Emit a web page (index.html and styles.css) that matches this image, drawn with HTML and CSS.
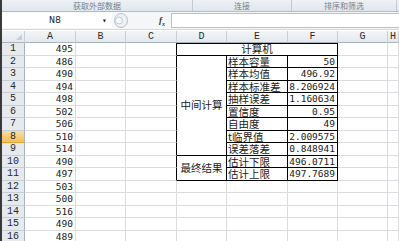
FILE: index.html
```html
<!DOCTYPE html>
<html lang="zh">
<head>
<meta charset="utf-8">
<link rel="stylesheet" href="styles.css">
</head>
<body>
<div class="app">
  <div class="ribbon">
    <div class="grp g1">获取外部数据</div>
    <div class="grp g2">连接</div>
    <div class="grp g3">排序和筛选</div>
  </div>
  <div class="fbar">
    <div class="namebox"><span class="nm">N8</span><span class="dd">&#9662;</span></div>
    <svg class="grip" width="14" height="15" viewBox="0 0 14 15"><rect x="0.5" y="0.5" width="13" height="14" rx="7" fill="#eef1f5" stroke="#b8c0ca"/><circle cx="5" cy="7.5" r="3.5" fill="#fafbfc" stroke="#c3cad3"/></svg>
    <span class="fx">f<sub>x</sub></span>
    <div class="finput"></div>
  </div>
  <div class="sheet">
    <div class="ch corner"><svg width="6" height="6" viewBox="0 0 6 6"><path d="M6 0V6H0Z" fill="#c9ced6"/></svg></div>
    <div class="ch">A</div><div class="ch">B</div><div class="ch">C</div><div class="ch">D</div><div class="ch">E</div><div class="ch">F</div><div class="ch">G</div><div class="ch">H</div>

    <div class="rh">1</div><div class="c n">495</div><div class="c"></div><div class="c tl"></div><div class="c t tt cap">计算机</div><div class="c"></div><div class="c"></div>

    <div class="rh">2</div><div class="c n">486</div><div class="c"></div><div class="c tl"></div><div class="c t grpd mid">中间计算</div><div class="c t lb">样本容量</div><div class="c t n">50</div><div class="c"></div><div class="c"></div>
    <div class="rh">3</div><div class="c n">490</div><div class="c"></div><div class="c tl"></div><div class="c t lb">样本均值</div><div class="c t n">496.92</div><div class="c"></div><div class="c"></div>
    <div class="rh">4</div><div class="c n">494</div><div class="c"></div><div class="c tl"></div><div class="c t lb">样本标准差</div><div class="c t n">8.206924</div><div class="c"></div><div class="c"></div>
    <div class="rh">5</div><div class="c n">498</div><div class="c"></div><div class="c tl"></div><div class="c t lb">抽样误差</div><div class="c t n">1.160634</div><div class="c"></div><div class="c"></div>
    <div class="rh">6</div><div class="c n">502</div><div class="c"></div><div class="c tl"></div><div class="c t lb">置信度</div><div class="c t n">0.95</div><div class="c"></div><div class="c"></div>
    <div class="rh">7</div><div class="c n">506</div><div class="c"></div><div class="c tl"></div><div class="c t lb">自由度</div><div class="c t n">49</div><div class="c"></div><div class="c"></div>
    <div class="rh sel">8</div><div class="c n">510</div><div class="c"></div><div class="c tl"></div><div class="c t lb">t临界值</div><div class="c t n">2.009575</div><div class="c"></div><div class="c"></div>
    <div class="rh">9</div><div class="c n">514</div><div class="c"></div><div class="c tl"></div><div class="c t lb">误差落差</div><div class="c t n">0.848941</div><div class="c"></div><div class="c"></div>
    <div class="rh">10</div><div class="c n">490</div><div class="c"></div><div class="c tl"></div><div class="c t grpe mid">最终结果</div><div class="c t lb">估计下限</div><div class="c t n">496.0711</div><div class="c"></div><div class="c"></div>
    <div class="rh">11</div><div class="c n">497</div><div class="c"></div><div class="c tl"></div><div class="c t lb">估计上限</div><div class="c t n">497.7689</div><div class="c"></div><div class="c"></div>

    <div class="rh">12</div><div class="c n">503</div><div class="c"></div><div class="c"></div><div class="c"></div><div class="c"></div><div class="c"></div><div class="c"></div><div class="c"></div>
    <div class="rh">13</div><div class="c n">500</div><div class="c"></div><div class="c"></div><div class="c"></div><div class="c"></div><div class="c"></div><div class="c"></div><div class="c"></div>
    <div class="rh">14</div><div class="c n">516</div><div class="c"></div><div class="c"></div><div class="c"></div><div class="c"></div><div class="c"></div><div class="c"></div><div class="c"></div>
    <div class="rh">15</div><div class="c n">490</div><div class="c"></div><div class="c"></div><div class="c"></div><div class="c"></div><div class="c"></div><div class="c"></div><div class="c"></div>
    <div class="rh">16</div><div class="c n">489</div><div class="c"></div><div class="c"></div><div class="c"></div><div class="c"></div><div class="c"></div><div class="c"></div><div class="c"></div>
  </div>
</div>
</body>
</html>
```
FILE: styles.css
```css
* { box-sizing: border-box; margin: 0; padding: 0; }
html, body { width: 399px; height: 241px; overflow: hidden; background: #fff; }
body { font-family: "DejaVu Sans Mono", "Noto Sans CJK SC", monospace; color: #1a1a1a; }

.app { height: 241px; border-left: 2px solid #3a3a3a; overflow: hidden; }

.ribbon {
  height: 12px;
  display: flex;
  background: linear-gradient(#eef1f5, #e0e6ed);
  border-bottom: 1px solid #b4bcc7;
}
.grp {
  display: flex;
  align-items: center;
  justify-content: center;
  border-right: 1px solid #c3cad3;
  font: 8px/1 "Noto Sans CJK SC", sans-serif;
  color: #7a7f86;
}
.g1 { width: 191px; }
.g2 { width: 99px; }
.g3 { width: 105px; }

.fbar {
  height: 18px;
  display: flex;
  align-items: center;
  background: #f4f6f8;
  border-bottom: 1px solid #d5dae1;
}
.namebox {
  width: 110px;
  height: 15px;
  display: flex;
  align-items: center;
  background: #fff;
}
.nm { flex: 1; text-align: center; font: 10px "Liberation Mono", monospace; padding-left: 6px; }
.dd { width: 10px; font-size: 8px; color: #222; }
.grip { margin-left: 2px; }
.fx {
  margin-left: 31px;
  width: 12px;
  font: italic bold 9px "Liberation Serif", serif;
  color: #333;
}
.fx sub { font-size: 6px; }
.finput {
  flex: 1;
  height: 15px;
  background: #fff;
  border: 1px solid #b9c1cb;
  border-right: none;
}

.sheet {
  margin-top: 1px;
  display: grid;
  grid-template-columns: 23px 51px 50px 51px 50px 61px 50px 50px 1fr;
  grid-template-rows: 12px repeat(16, 12.5px);
  font-size: 9.5px;
}
.ch {
  background: linear-gradient(#f3f5f8, #e4e8ed);
  border-right: 1px solid #c8ced6;
  border-bottom: 1px solid #a9b1bb;
  text-align: center;
  font: 10px/11px "Liberation Mono", monospace;
  color: #2a2a2a;
}
.corner { display: flex; align-items: flex-end; justify-content: flex-end; padding: 0 2px 2px 0; }
.rh {
  background: #e6eaef;
  border-right: 1px solid #a9b1bb;
  border-bottom: 1px solid #c8ced6;
  text-align: center;
  font: 10px/12px "Liberation Mono", monospace;
  color: #2a2a2a;
}
.rh.sel {
  background: linear-gradient(#f9dc9e, #f1c15c);
  border-bottom-color: #e5a435;
}
.c {
  border-right: 1px solid #dadcdf;
  border-bottom: 1px solid #dadcdf;
  line-height: 12px;
  white-space: nowrap;
}
.n { text-align: right; padding-right: 2px; }
.t { border-right-color: #000; border-bottom-color: #000; }
.tl { border-right-color: #000; }
.tt { box-shadow: inset 0 1px 0 #000; }
.cap { grid-column: span 3; text-align: center; font: 10.5px/12px "Noto Sans CJK SC", sans-serif; }
.lb { font: 10.5px/12px "Noto Sans CJK SC", sans-serif; padding-left: 1px; }
.mid {
  display: flex;
  align-items: center;
  justify-content: center;
  font: 10.5px/12px "Noto Sans CJK SC", sans-serif;
}
.grpd { grid-row: span 8; }
.grpe { grid-row: span 2; }
```
